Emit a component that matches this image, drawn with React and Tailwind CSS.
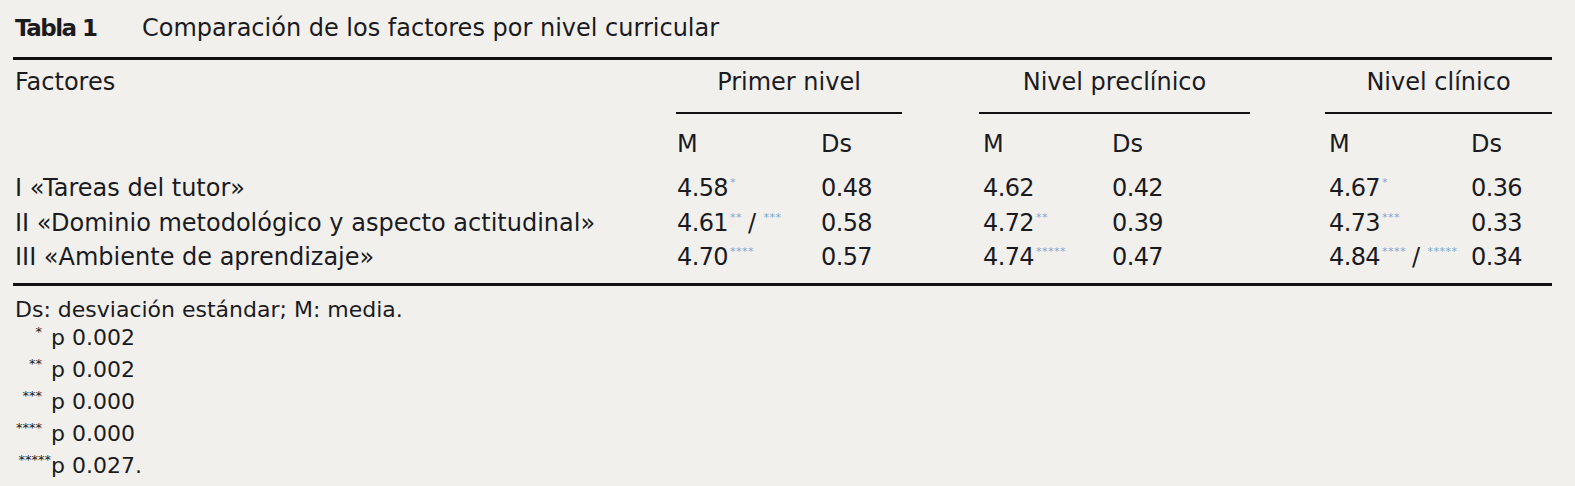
const rows = [
  {
    factor: 'I «Tareas del tutor»',
    cells: [
      { value: '4.58', sup: ['*'] },
      { value: '0.48' },
      { value: '4.62' },
      { value: '0.42' },
      { value: '4.67', sup: ['*'] },
      { value: '0.36' },
    ],
  },
  {
    factor: 'II «Dominio metodológico y aspecto actitudinal»',
    cells: [
      { value: '4.61', sup: ['**', '***'] },
      { value: '0.58' },
      { value: '4.72', sup: ['**'] },
      { value: '0.39' },
      { value: '4.73', sup: ['***'] },
      { value: '0.33' },
    ],
  },
  {
    factor: 'III «Ambiente de aprendizaje»',
    cells: [
      { value: '4.70', sup: ['****'] },
      { value: '0.57' },
      { value: '4.74', sup: ['*****'] },
      { value: '0.47' },
      { value: '4.84', sup: ['****', '*****'] },
      { value: '0.34' },
    ],
  },
];

const notes = [
  { mark: '*', pad: 'pr-[9px]', text: 'p 0.002' },
  { mark: '**', pad: 'pr-[9px]', text: 'p 0.002' },
  { mark: '***', pad: 'pr-[9px]', text: 'p 0.000' },
  { mark: '****', pad: 'pr-[9px]', text: 'p 0.000' },
  { mark: '*****', pad: 'pr-0', text: 'p 0.027.' },
];

function Sup({ children }) {
  return (
    <span className="relative -top-[10px] ml-[2px] text-[11px] tracking-[0.5px] text-[#79a9d4]">
      {children}
    </span>
  );
}

function Value({ value, sup }) {
  return (
    <div className="h-[34.5px] pl-[1px] leading-[34.5px] tracking-[-0.6px] whitespace-nowrap">
      {value}
      {sup && sup.length === 1 ? <Sup>{sup[0]}</Sup> : null}
      {sup && sup.length === 2 ? (
        <>
          <Sup>{sup[0]}</Sup>
          <span className="mx-[6px]">/</span>
          <Sup>{sup[1]}</Sup>
        </>
      ) : null}
    </div>
  );
}

export default function App() {
  return (
    <div className="w-[1575px] h-[486px] overflow-hidden bg-[#f1f0ec] text-[#1b1b1f] font-['DejaVu_Sans',sans-serif] text-[24px]">
      <div className="flex h-[57px] pt-[13px] pl-[15px] leading-[30px]">
        <span className="w-[127px] font-bold text-[23px] tracking-[-1.5px]">Tabla 1</span>
        <span>Comparación de los factores por nivel curricular</span>
      </div>

      <div className="ml-[13px] w-[1539px] grid grid-cols-[663px_144px_162px_129px_217px_142px_82px] border-t-[3px] border-b-[3px] border-[#111] pb-[8px]">
        <div className="h-[54px] pt-[7px] pl-[2px] leading-[30px]">Factores</div>
        <div className="col-span-2 mr-[80px] h-[54px] pt-[7px] leading-[30px] text-center border-b-2 border-[#111]">
          Primer nivel
        </div>
        <div className="col-span-2 -ml-[3px] mr-[78px] h-[54px] pt-[7px] leading-[30px] text-center border-b-2 border-[#111]">
          Nivel preclínico
        </div>
        <div className="col-span-2 -ml-[3px] h-[54px] pt-[7px] leading-[30px] text-center border-b-2 border-[#111]">
          Nivel clínico
        </div>

        <div className="h-[57px]"></div>
        {['M', 'Ds', 'M', 'Ds', 'M', 'Ds'].map((label, i) => (
          <div key={i} className="h-[57px] pt-[15px] pl-[1px] leading-[30px]">
            {label}
          </div>
        ))}

        {rows.map((row) => (
          <div key={row.factor} className="contents">
            <div className="h-[34.5px] pl-[2px] leading-[34.5px] whitespace-nowrap">{row.factor}</div>
            {row.cells.map((cell, i) => (
              <Value key={i} value={cell.value} sup={cell.sup} />
            ))}
          </div>
        ))}
      </div>

      <div className="pl-[15px] pt-[12px] text-[22px]">
        <div className="leading-[24px]">Ds: desviación estándar; M: media.</div>
        {notes.map((note, i) => (
          <div key={i} className="flex h-[32px]">
            <span className={`w-[36px] text-right text-[13px] leading-none pt-[3px] ${note.pad}`}>{note.mark}</span>
            <span className="leading-[32px]">{note.text}</span>
          </div>
        ))}
      </div>
    </div>
  );
}
